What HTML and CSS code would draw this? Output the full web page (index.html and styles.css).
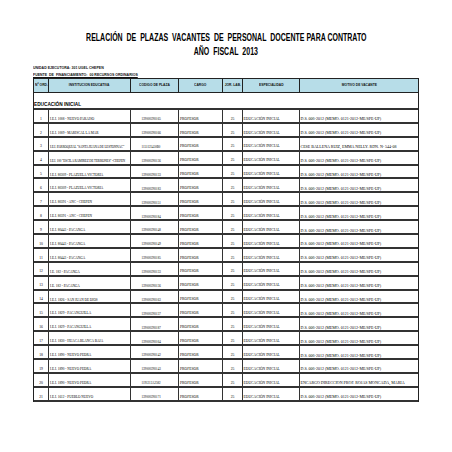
FILE: index.html
```html
<!DOCTYPE html>
<html lang="es">
<head>
<meta charset="utf-8">
<title>Relación de plazas vacantes</title>
<link rel="stylesheet" href="styles.css">
</head>
<body>
<div class="page">
  <header class="title">
    <h1><span>RELACIÓN&nbsp; DE&nbsp; PLAZAS&nbsp; VACANTES&nbsp; DE&nbsp; PERSONAL&nbsp; DOCENTE PARA CONTRATO</span></h1>
    <h2><span>AÑO&nbsp; FISCAL&nbsp; 2013</span></h2>
  </header>
  <div class="meta">
    <p><span>UNIDAD EJECUTORA: 301 UGEL CHEPEN</span></p>
    <p class="under"><span>FUENTE&nbsp; DE&nbsp; FINANCIAMIENTO:&nbsp; 00 RECURSOS ORDINARIOS</span></p>
  </div>
  <div class="table">
    <div class="row head">
      <div class="c"><span>Nº ORD.</span></div>
      <div class="c"><span>INSTITUCION EDUCATIVA</span></div>
      <div class="c"><span>CODIGO DE PLAZA</span></div>
      <div class="c"><span>CARGO</span></div>
      <div class="c"><span>JOR. LAB.</span></div>
      <div class="c"><span>ESPECIALIDAD</span></div>
      <div class="c"><span>MOTIVO DE VACANTE</span></div>
    </div>
    <div class="section"><span>EDUCACIÓN INICIAL</span></div>

    <div class="row"><div class="c n">1</div><div class="c ie">I.E.I. 1008 - NUEVO PARAISO</div><div class="c cod">1390005N0165</div><div class="c car">PROFESOR</div><div class="c jl">25</div><div class="c esp">EDUCACIÓN INICIAL</div><div class="c mot">D.S. 006-2012 (MEMO. 0121-2012-ME/SPE-UP)</div></div>
    <div class="row"><div class="c n">2</div><div class="c ie">I.E.I. 1009 - MARISCAL LA MAR</div><div class="c cod">1390005N0166</div><div class="c car">PROFESOR</div><div class="c jl">25</div><div class="c esp">EDUCACIÓN INICIAL</div><div class="c mot">D.S. 006-2012 (MEMO. 0121-2012-ME/SPE-UP)</div></div>
    <div class="row"><div class="c n">3</div><div class="c ie tight">I.E.I. PARROQUIAL "SANTA JUANA DE LESTONNAC"</div><div class="c cod">1151125450B0</div><div class="c car">PROFESOR</div><div class="c jl">25</div><div class="c esp">EDUCACIÓN INICIAL</div><div class="c mot">CESE BALLENA RUIZ, EMMA NELLY. RDN. Nº 544-08</div></div>
    <div class="row"><div class="c n">4</div><div class="c ie tight">I.E.I. 100 "ESCILA RAMIREZ DE TERRONES" -CHEPEN</div><div class="c cod">1390005N0136</div><div class="c car">PROFESOR</div><div class="c jl">25</div><div class="c esp">EDUCACIÓN INICIAL</div><div class="c mot">D.S. 006-2012 (MEMO. 0121-2012-ME/SPE-UP)</div></div>
    <div class="row"><div class="c n">5</div><div class="c ie">I.E.I. 80309 - PLAZUELA VICTORIA</div><div class="c cod">1390005N0133</div><div class="c car">PROFESOR</div><div class="c jl">25</div><div class="c esp">EDUCACIÓN INICIAL</div><div class="c mot">D.S. 006-2012 (MEMO. 0121-2012-ME/SPE-UP)</div></div>
    <div class="row"><div class="c n">6</div><div class="c ie">I.E.I. 80309 - PLAZUELA VICTORIA</div><div class="c cod">1390005N0183</div><div class="c car">PROFESOR</div><div class="c jl">25</div><div class="c esp">EDUCACIÓN INICIAL</div><div class="c mot">D.S. 006-2012 (MEMO. 0121-2012-ME/SPE-UP)</div></div>
    <div class="row"><div class="c n">7</div><div class="c ie">I.E.I. 80391 - ANC - CHEPEN</div><div class="c cod">1390005N0151</div><div class="c car">PROFESOR</div><div class="c jl">25</div><div class="c esp">EDUCACIÓN INICIAL</div><div class="c mot">D.S. 006-2012 (MEMO. 0121-2012-ME/SPE-UP)</div></div>
    <div class="row"><div class="c n">8</div><div class="c ie">I.E.I. 80391 - ANC - CHEPEN</div><div class="c cod">1390005N0184</div><div class="c car">PROFESOR</div><div class="c jl">25</div><div class="c esp">EDUCACIÓN INICIAL</div><div class="c mot">D.S. 006-2012 (MEMO. 0121-2012-ME/SPE-UP)</div></div>
    <div class="row"><div class="c n">9</div><div class="c ie">I.E.I. 80443 - PACANGA</div><div class="c cod">1390005N0148</div><div class="c car">PROFESOR</div><div class="c jl">25</div><div class="c esp">EDUCACIÓN INICIAL</div><div class="c mot">D.S. 006-2012 (MEMO. 0121-2012-ME/SPE-UP)</div></div>
    <div class="row"><div class="c n">10</div><div class="c ie">I.E.I. 80443 - PACANGA</div><div class="c cod">1390005N0149</div><div class="c car">PROFESOR</div><div class="c jl">25</div><div class="c esp">EDUCACIÓN INICIAL</div><div class="c mot">D.S. 006-2012 (MEMO. 0121-2012-ME/SPE-UP)</div></div>
    <div class="row"><div class="c n">11</div><div class="c ie">I.E.I. 80443 - PACANGA</div><div class="c cod">1390005N0185</div><div class="c car">PROFESOR</div><div class="c jl">25</div><div class="c esp">EDUCACIÓN INICIAL</div><div class="c mot">D.S. 006-2012 (MEMO. 0121-2012-ME/SPE-UP)</div></div>
    <div class="row"><div class="c n">12</div><div class="c ie">I.E. 182 - PACANGA</div><div class="c cod">1390005N0133</div><div class="c car">PROFESOR</div><div class="c jl">25</div><div class="c esp">EDUCACIÓN INICIAL</div><div class="c mot">D.S. 006-2012 (MEMO. 0121-2012-ME/SPE-UP)</div></div>
    <div class="row"><div class="c n">13</div><div class="c ie">I.E. 182 - PACANGA</div><div class="c cod">1390005N0136</div><div class="c car">PROFESOR</div><div class="c jl">25</div><div class="c esp">EDUCACIÓN INICIAL</div><div class="c mot">D.S. 006-2012 (MEMO. 0121-2012-ME/SPE-UP)</div></div>
    <div class="row"><div class="c n">14</div><div class="c ie">I.E.I. 1826 - SAN JUAN DE DIOS</div><div class="c cod">1390005N0163</div><div class="c car">PROFESOR</div><div class="c jl">25</div><div class="c esp">EDUCACIÓN INICIAL</div><div class="c mot">D.S. 006-2012 (MEMO. 0121-2012-ME/SPE-UP)</div></div>
    <div class="row"><div class="c n">15</div><div class="c ie">I.E.I. 1829 - PACANGUILLA</div><div class="c cod">1390005N0137</div><div class="c car">PROFESOR</div><div class="c jl">25</div><div class="c esp">EDUCACIÓN INICIAL</div><div class="c mot">D.S. 006-2012 (MEMO. 0121-2012-ME/SPE-UP)</div></div>
    <div class="row"><div class="c n">16</div><div class="c ie">I.E.I. 1829 - PACANGUILLA</div><div class="c cod">1390005N0187</div><div class="c car">PROFESOR</div><div class="c jl">25</div><div class="c esp">EDUCACIÓN INICIAL</div><div class="c mot">D.S. 006-2012 (MEMO. 0121-2012-ME/SPE-UP)</div></div>
    <div class="row"><div class="c n">17</div><div class="c ie">I.E.I. 1830 - HUACA BLANCA BAJA</div><div class="c cod">1390005N0164</div><div class="c car">PROFESOR</div><div class="c jl">25</div><div class="c esp">EDUCACIÓN INICIAL</div><div class="c mot">D.S. 006-2012 (MEMO. 0121-2012-ME/SPE-UP)</div></div>
    <div class="row"><div class="c n">18</div><div class="c ie">I.E.I. 1890 - NUEVO PEDRA</div><div class="c cod">1390005N0142</div><div class="c car">PROFESOR</div><div class="c jl">25</div><div class="c esp">EDUCACIÓN INICIAL</div><div class="c mot">D.S. 006-2012 (MEMO. 0121-2012-ME/SPE-UP)</div></div>
    <div class="row"><div class="c n">19</div><div class="c ie">I.E.I. 1890 - NUEVO PEDRA</div><div class="c cod">1390005N0143</div><div class="c car">PROFESOR</div><div class="c jl">25</div><div class="c esp">EDUCACIÓN INICIAL</div><div class="c mot">D.S. 006-2012 (MEMO. 0121-2012-ME/SPE-UP)</div></div>
    <div class="row"><div class="c n">20</div><div class="c ie">I.E.I. 1890 - NUEVO PEDRA</div><div class="c cod">1191212A2582</div><div class="c car">PROFESOR</div><div class="c jl">25</div><div class="c esp">EDUCACIÓN INICIAL</div><div class="c mot">ENCARGO DIRECCION PROF. ROJAS MONCADA, MARIA</div></div>
    <div class="row"><div class="c n">21</div><div class="c ie">I.E.I. 1612 - PUEBLO NUEVO</div><div class="c cod">1390005N0171</div><div class="c car">PROFESOR</div><div class="c jl">25</div><div class="c esp">EDUCACIÓN INICIAL</div><div class="c mot">D.S. 006-2012 (MEMO. 0121-2012-ME/SPE-UP)</div></div>
  </div>
</div>
</body>
</html>
```

FILE: styles.css
```css
* {
  box-sizing: border-box;
  margin: 0;
  padding: 0;
}

html, body {
  background: #ffffff;
}

body {
  width: 452px;
  height: 452px;
  overflow: hidden;
  font-family: "Liberation Serif", "Times New Roman", serif;
  color: #000000;
}

.page {
  padding: 30.5px 0 0 33px;
  width: 419px;
}

.title {
  width: 386px;
  font-family: "Liberation Sans", Arial, sans-serif;
  color: #000000;
}

.title h1,
.title h2 {
  display: flex;
  justify-content: center;
  font-size: 10px;
  font-weight: bold;
  line-height: 14px;
}

.title span {
  display: inline-block;
  white-space: nowrap;
  transform: scaleX(0.7);
  transform-origin: center;
}

.meta {
  margin-top: 5px;
  font-family: "Liberation Sans", Arial, sans-serif;
  font-weight: bold;
  font-size: 4px;
  line-height: 7px;
  color: #111111;
}

.meta p {
  white-space: nowrap;
}

.meta span {
  display: inline-block;
  transform: scaleX(0.88);
  transform-origin: left center;
}

.meta .under span {
  text-decoration: underline;
}

.table {
  width: 386px;
  border-left: 1px solid #222222;
  border-right: 1px solid #222222;
}

.row {
  display: grid;
  grid-template-columns: 15px 82px 48px 44px 20px 57px 118px;
  height: 13.9px;
  border-bottom: 2px solid #333333;
}

.c {
  display: flex;
  align-items: flex-end;
  padding-bottom: 0.5px;
  border-right: 1px solid #333333;
  overflow: hidden;
  white-space: nowrap;
  font-size: 3.7px;
  line-height: 1;
}

.c:last-child {
  border-right: none;
}

.head {
  height: 15px;
  background: #b7dde8;
  border-top: 1px solid #222222;
  border-bottom: 1px solid #222222;
}

.head .c {
  align-items: center;
  justify-content: center;
  padding: 0;
  border-right-color: #222222;
  font-family: "Liberation Sans", Arial, sans-serif;
  font-weight: bold;
  font-size: 4.4px;
  color: #111111;
}

.head .c span {
  display: inline-block;
  transform: scaleX(0.75);
  transform-origin: center;
}

.section {
  height: 17.5px;
  display: flex;
  align-items: flex-end;
  padding-bottom: 0.5px;
  border-bottom: 2px solid #333333;
  font-family: "Liberation Sans", Arial, sans-serif;
  font-weight: bold;
  font-size: 5.5px;
  line-height: 1;
  color: #000000;
}

.section span {
  display: inline-block;
  white-space: nowrap;
  transform: scaleX(0.86);
  transform-origin: left bottom;
}

.n,
.jl {
  justify-content: center;
}

.ie {
  padding-left: 1px;
  font-size: 3.4px;
}

.ie.tight {
  letter-spacing: -0.12px;
  font-size: 3.3px;
}

.cod {
  padding-left: 10.5px;
  font-size: 3.1px;
}

.car {
  padding-left: 1px;
  font-size: 3.7px;
}

.esp {
  padding-left: 0.5px;
}

.mot {
  padding-left: 0.5px;
  font-size: 4px;
}
```
